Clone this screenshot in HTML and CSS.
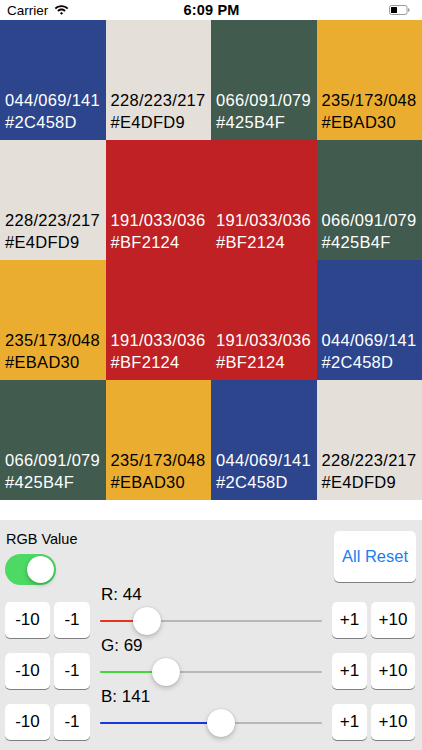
FILE: index.html
```html
<!DOCTYPE html>
<html>
<head>
<meta charset="utf-8">
<link rel="stylesheet" href="styles.css">
</head>
<body>
<div class="screen">
  <div class="status">
    <div class="status-left">
      <span class="carrier">Carrier</span>
      <svg class="wifi" width="15" height="11" viewBox="0 0 15 11">
        <path d="M7.5 1.2C4.9 1.2 2.5 2.2 0.7 3.9L2 5.3C3.5 3.9 5.4 3.1 7.5 3.1S11.5 3.9 13 5.3L14.3 3.9C12.5 2.2 10.1 1.2 7.5 1.2Z" fill="#000"/>
        <path d="M7.5 4.6C5.9 4.6 4.4 5.2 3.3 6.3L4.6 7.7C5.4 6.9 6.4 6.5 7.5 6.5S9.6 6.9 10.4 7.7L11.7 6.3C10.6 5.2 9.1 4.6 7.5 4.6Z" fill="#000"/>
        <path d="M7.5 8L5.9 9.3L7.5 10.8L9.1 9.3Z" fill="#000"/>
      </svg>
    </div>
    <div class="time">6:09 PM</div>
    <div class="status-right">
      <svg class="battery" width="21" height="10" viewBox="0 0 21 10">
        <rect x="0.5" y="0.5" width="17.5" height="9" rx="2" fill="none" stroke="#9a9a9a" stroke-width="1"/>
        <rect x="2" y="2" width="6" height="6" rx="0.5" fill="#000"/>
        <rect x="19" y="3.3" width="1.4" height="3.4" rx="0.6" fill="#9a9a9a"/>
      </svg>
    </div>
  </div>

  <div class="grid">
    <div class="cell c-blue"><span>044/069/141</span><span>#2C458D</span></div>
    <div class="cell c-beige"><span>228/223/217</span><span>#E4DFD9</span></div>
    <div class="cell c-green"><span>066/091/079</span><span>#425B4F</span></div>
    <div class="cell c-yellow"><span>235/173/048</span><span>#EBAD30</span></div>

    <div class="cell c-beige"><span>228/223/217</span><span>#E4DFD9</span></div>
    <div class="cell c-red"><span>191/033/036</span><span>#BF2124</span></div>
    <div class="cell c-red"><span>191/033/036</span><span>#BF2124</span></div>
    <div class="cell c-green"><span>066/091/079</span><span>#425B4F</span></div>

    <div class="cell c-yellow"><span>235/173/048</span><span>#EBAD30</span></div>
    <div class="cell c-red"><span>191/033/036</span><span>#BF2124</span></div>
    <div class="cell c-red"><span>191/033/036</span><span>#BF2124</span></div>
    <div class="cell c-blue"><span>044/069/141</span><span>#2C458D</span></div>

    <div class="cell c-green"><span>066/091/079</span><span>#425B4F</span></div>
    <div class="cell c-yellow"><span>235/173/048</span><span>#EBAD30</span></div>
    <div class="cell c-blue"><span>044/069/141</span><span>#2C458D</span></div>
    <div class="cell c-beige"><span>228/223/217</span><span>#E4DFD9</span></div>
  </div>

  <div class="spacer"></div>

  <div class="panel">
    <div class="panel-top">
      <div class="toggle-group">
        <div class="toggle-label">RGB Value</div>
        <div class="switch"><div class="knob"></div></div>
      </div>
      <button class="btn reset">All Reset</button>
    </div>

    <div class="row">
      <button class="btn w45">-10</button>
      <button class="btn w36">-1</button>
      <div class="slider-col">
        <div class="slider-label">R: 44</div>
        <div class="slider">
          <div class="track"></div>
          <div class="fill red" style="width: 47px"></div>
          <div class="thumb" style="left: 33px"></div>
        </div>
      </div>
      <button class="btn w35">+1</button>
      <button class="btn w44">+10</button>
    </div>

    <div class="row">
      <button class="btn w45">-10</button>
      <button class="btn w36">-1</button>
      <div class="slider-col">
        <div class="slider-label">G: 69</div>
        <div class="slider">
          <div class="track"></div>
          <div class="fill green" style="width: 66px"></div>
          <div class="thumb" style="left: 52px"></div>
        </div>
      </div>
      <button class="btn w35">+1</button>
      <button class="btn w44">+10</button>
    </div>

    <div class="row">
      <button class="btn w45">-10</button>
      <button class="btn w36">-1</button>
      <div class="slider-col">
        <div class="slider-label">B: 141</div>
        <div class="slider">
          <div class="track"></div>
          <div class="fill blue" style="width: 121px"></div>
          <div class="thumb" style="left: 107px"></div>
        </div>
      </div>
      <button class="btn w35">+1</button>
      <button class="btn w44">+10</button>
    </div>
  </div>
</div>
</body>
</html>
```

FILE: styles.css
```css
* { box-sizing: border-box; }

html, body {
  margin: 0;
  padding: 0;
  background: #ffffff;
  font-family: "Liberation Sans", Arial, sans-serif;
}

.screen {
  width: 422px;
  height: 750px;
  overflow: hidden;
  display: flex;
  flex-direction: column;
}

/* status bar */
.status {
  height: 20px;
  display: flex;
  align-items: center;
  justify-content: space-between;
  padding: 0 6px 0 7px;
}
.status-left {
  display: flex;
  align-items: center;
  gap: 6px;
  width: 120px;
}
.carrier {
  font-size: 13.5px;
  color: #000;
}
.wifi { margin-top: -1px; }
.time {
  font-size: 14.5px;
  font-weight: bold;
  color: #000;
  letter-spacing: 0.2px;
}
.status-right {
  width: 120px;
  display: flex;
  justify-content: flex-end;
  padding-right: 6px;
}

/* grid */
.grid {
  display: grid;
  grid-template-columns: repeat(4, 1fr);
  grid-template-rows: repeat(4, 120px);
}
.cell {
  display: flex;
  flex-direction: column;
  justify-content: flex-end;
  padding: 0 0 7px 5px;
  font-size: 16.5px;
  line-height: 22px;
  letter-spacing: 0.3px;
  white-space: nowrap;
}
.c-blue { background: #2C458D; color: #ffffff; }
.c-beige { background: #E4DFD9; color: #000000; }
.c-green { background: #425B4F; color: #ffffff; }
.c-yellow { background: #EBAD30; color: #000000; }
.c-red { background: #BF2124; color: #ffffff; }

.spacer { height: 20px; background: #ffffff; }

/* panel */
.panel {
  flex: 1;
  background: #e8e8e8;
  padding: 0 6px 0 5px;
}
.panel-top {
  height: 67px;
  padding-top: 11px;
  display: flex;
  justify-content: space-between;
  align-items: flex-start;
}
.toggle-group {
  display: flex;
  flex-direction: column;
  gap: 7px;
}
.toggle-label {
  font-size: 14.5px;
  line-height: 16px;
  color: #000;
  padding-left: 1px;
}
.switch {
  width: 51px;
  height: 31px;
  border-radius: 16px;
  background: #4cd964;
  position: relative;
}
.knob {
  position: absolute;
  right: 2px;
  top: 2px;
  width: 27px;
  height: 27px;
  border-radius: 50%;
  background: #fff;
  box-shadow: 0 2px 4px rgba(0,0,0,0.25), 0 0 1px rgba(0,0,0,0.2);
}

.btn {
  border: none;
  margin: 0;
  padding: 0;
  background: #ffffff;
  border-radius: 5px;
  box-shadow: 0 1px 0.5px rgba(0,0,0,0.45);
  font-family: "Liberation Sans", Arial, sans-serif;
  font-size: 17px;
  color: #000;
  height: 36px;
  display: flex;
  align-items: center;
  justify-content: center;
}
.reset {
  width: 82px;
  height: 51px;
  color: #1a7ef2;
  font-size: 16.5px;
}
.w45 { width: 45px; }
.w36 { width: 36px; }
.w35 { width: 35px; }
.w44 { width: 44px; }

.row {
  height: 51px;
  display: flex;
  align-items: flex-end;
  gap: 4px;
}
.slider-col {
  width: 222px;
  height: 51px;
  margin: 0 6px;
  display: flex;
  flex-direction: column;
}
.slider-label {
  height: 16px;
  font-size: 17px;
  line-height: 16px;
  color: #000;
  padding-left: 1px;
}
.slider {
  flex: 1;
  position: relative;
}
.track {
  position: absolute;
  left: 0;
  right: 0;
  top: 16.5px;
  height: 2px;
  border-radius: 1px;
  background: #b7b7b7;
}
.fill {
  position: absolute;
  left: 0;
  top: 16.5px;
  height: 2px;
  border-radius: 1px;
}
.fill.red { background: #e8321e; }
.fill.green { background: #44d838; }
.fill.blue { background: #1538e0; }
.thumb {
  position: absolute;
  top: 3.5px;
  width: 28px;
  height: 28px;
  border-radius: 50%;
  background: #fff;
  box-shadow: 0 2px 5px rgba(0,0,0,0.22), 0 0 1px rgba(0,0,0,0.25);
}
```
